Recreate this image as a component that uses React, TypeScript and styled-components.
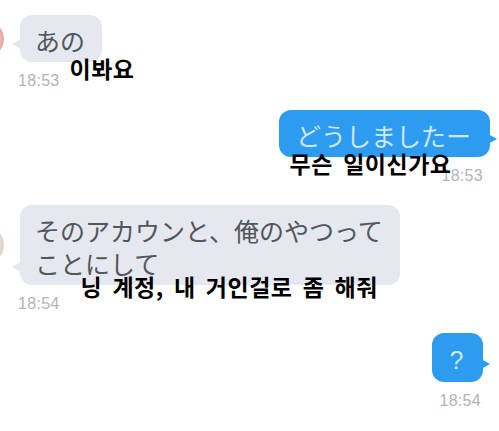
import React from "react";
import styled, { createGlobalStyle, css } from "styled-components";

const GlobalStyle = createGlobalStyle`
  html, body {
    margin: 0;
    padding: 0;
    background: #ffffff;
  }
  body {
    width: 499px;
    height: 431px;
    overflow: hidden;
    font-family: "Noto Sans CJK JP", "Noto Sans", sans-serif;
  }
`;

const Thread = styled.div`
  display: flex;
  flex-direction: column;
  gap: 21px;
  padding: 15px 9px 0 20px;
  overflow: hidden;
  height: 431px;
  box-sizing: border-box;
`;

const Group = styled.div<{ $side: "in" | "out" }>`
  display: flex;
  flex-direction: column;
  align-items: ${(p) => (p.$side === "in" ? "flex-start" : "flex-end")};
`;

const BubbleRow = styled.div<{ $side: "in" | "out" }>`
  display: flex;
  align-items: center;
  gap: 16px;
  ${(p) =>
    p.$side === "in" &&
    css`
      margin-left: -20px;
    `}
`;

const Avatar = styled.div<{ $tone: string }>`
  width: 36px;
  height: 36px;
  border-radius: 50%;
  margin-left: -32px;
  flex: none;
  background: ${(p) => p.$tone};
`;

const Bubble = styled.div<{ $side: "in" | "out"; $mr?: number }>`
  position: relative;
  border-radius: 12px;
  padding: 9px 17px 5px 15px;
  font-size: 25px;
  line-height: 33px;
  font-weight: 400;
  white-space: nowrap;
  margin-right: ${(p) => p.$mr ?? 0}px;
  ${(p) =>
    p.$side === "in"
      ? css`
          background: #e5e8ee;
          color: #52565d;
        `
      : css`
          background: #2d9bf0;
          color: #cfe7fb;
          padding: 9px 19px 5px 17px;
        `}

  &::before {
    content: "";
    position: absolute;
    bottom: 13px;
    width: 0;
    height: 0;
    border-top: 5px solid transparent;
    border-bottom: 5px solid transparent;
    ${(p) =>
      p.$side === "in"
        ? css`
            left: -8px;
            border-right: 9px solid #e5e8ee;
          `
        : css`
            right: -7px;
            border-left: 9px solid #2d9bf0;
          `}
  }
`;

const QuestionText = styled.span`
  display: inline-block;
  min-width: 15px;
  text-align: center;
  font-family: "Liberation Sans", "Noto Sans", sans-serif;
`;

const Meta = styled.div<{ $side: "in" | "out" }>`
  display: flex;
  align-items: flex-start;
  justify-content: ${(p) => (p.$side === "in" ? "flex-start" : "flex-end")};
  align-self: stretch;
`;

const Time = styled.span<{ $mr?: number; $ml?: number }>`
  font-family: "Liberation Sans", Arial, sans-serif;
  font-size: 16px;
  line-height: 16px;
  letter-spacing: 0.3px;
  color: #b3b3b5;
  margin-top: 11px;
  margin-right: ${(p) => p.$mr ?? 0}px;
  margin-left: ${(p) => p.$ml ?? 0}px;
  white-space: nowrap;
`;

const Caption = styled.span<{ $dx?: number; $dy?: number; $mr?: number }>`
  font-family: "Noto Sans CJK KR", "Noto Sans", sans-serif;
  font-weight: 700;
  font-size: 23px;
  line-height: 26px;
  letter-spacing: 0.5px;
  word-spacing: 4.5px;
  color: #000000;
  white-space: nowrap;
  margin-left: ${(p) => p.$dx ?? 0}px;
  margin-top: ${(p) => p.$dy ?? 0}px;
  margin-right: ${(p) => p.$mr ?? 0}px;
  position: relative;
`;

export default function App() {
  return (
    <>
      <GlobalStyle />
      <Thread>
        <Group $side="in">
          <BubbleRow $side="in">
            <Avatar $tone="radial-gradient(circle at 70% 50%, #f1c9c4 0%, #e7a8a2 40%, #f6e4e2 100%)" />
            <Bubble $side="in">あの</Bubble>
          </BubbleRow>
          <Meta $side="in">
            <Time $ml={-2}>18:53</Time>
            <Caption $dx={10} $dy={-7}>
              이봐요
            </Caption>
          </Meta>
        </Group>

        <Group $side="out">
          <BubbleRow $side="out">
            <Bubble $side="out">どうしましたー</Bubble>
          </BubbleRow>
          <Meta $side="out">
            <Caption $dy={-7} $mr={-10}>
              무슨 일이신가요
            </Caption>
            <Time $mr={7}>18:53</Time>
          </Meta>
        </Group>

        <Group $side="in">
          <BubbleRow $side="in">
            <Avatar $tone="radial-gradient(circle at 70% 50%, #e9e3dc 0%, #d9cfc6 50%, #f3efeb 100%)" />
            <Bubble $side="in">
              そのアカウンと、俺のやつって
              <br />
              ことにして
            </Bubble>
          </BubbleRow>
          <Meta $side="in">
            <Time $ml={-2}>18:54</Time>
            <Caption $dx={21} $dy={-12}>
              닝 계정, 내 거인걸로 좀 해줘
            </Caption>
          </Meta>
        </Group>

        <Group $side="out">
          <BubbleRow $side="out">
            <Bubble $side="out" $mr={7}>
              <QuestionText>?</QuestionText>
            </Bubble>
          </BubbleRow>
          <Meta $side="out">
            <Time $mr={9}>18:54</Time>
          </Meta>
        </Group>
      </Thread>
    </>
  );
}
